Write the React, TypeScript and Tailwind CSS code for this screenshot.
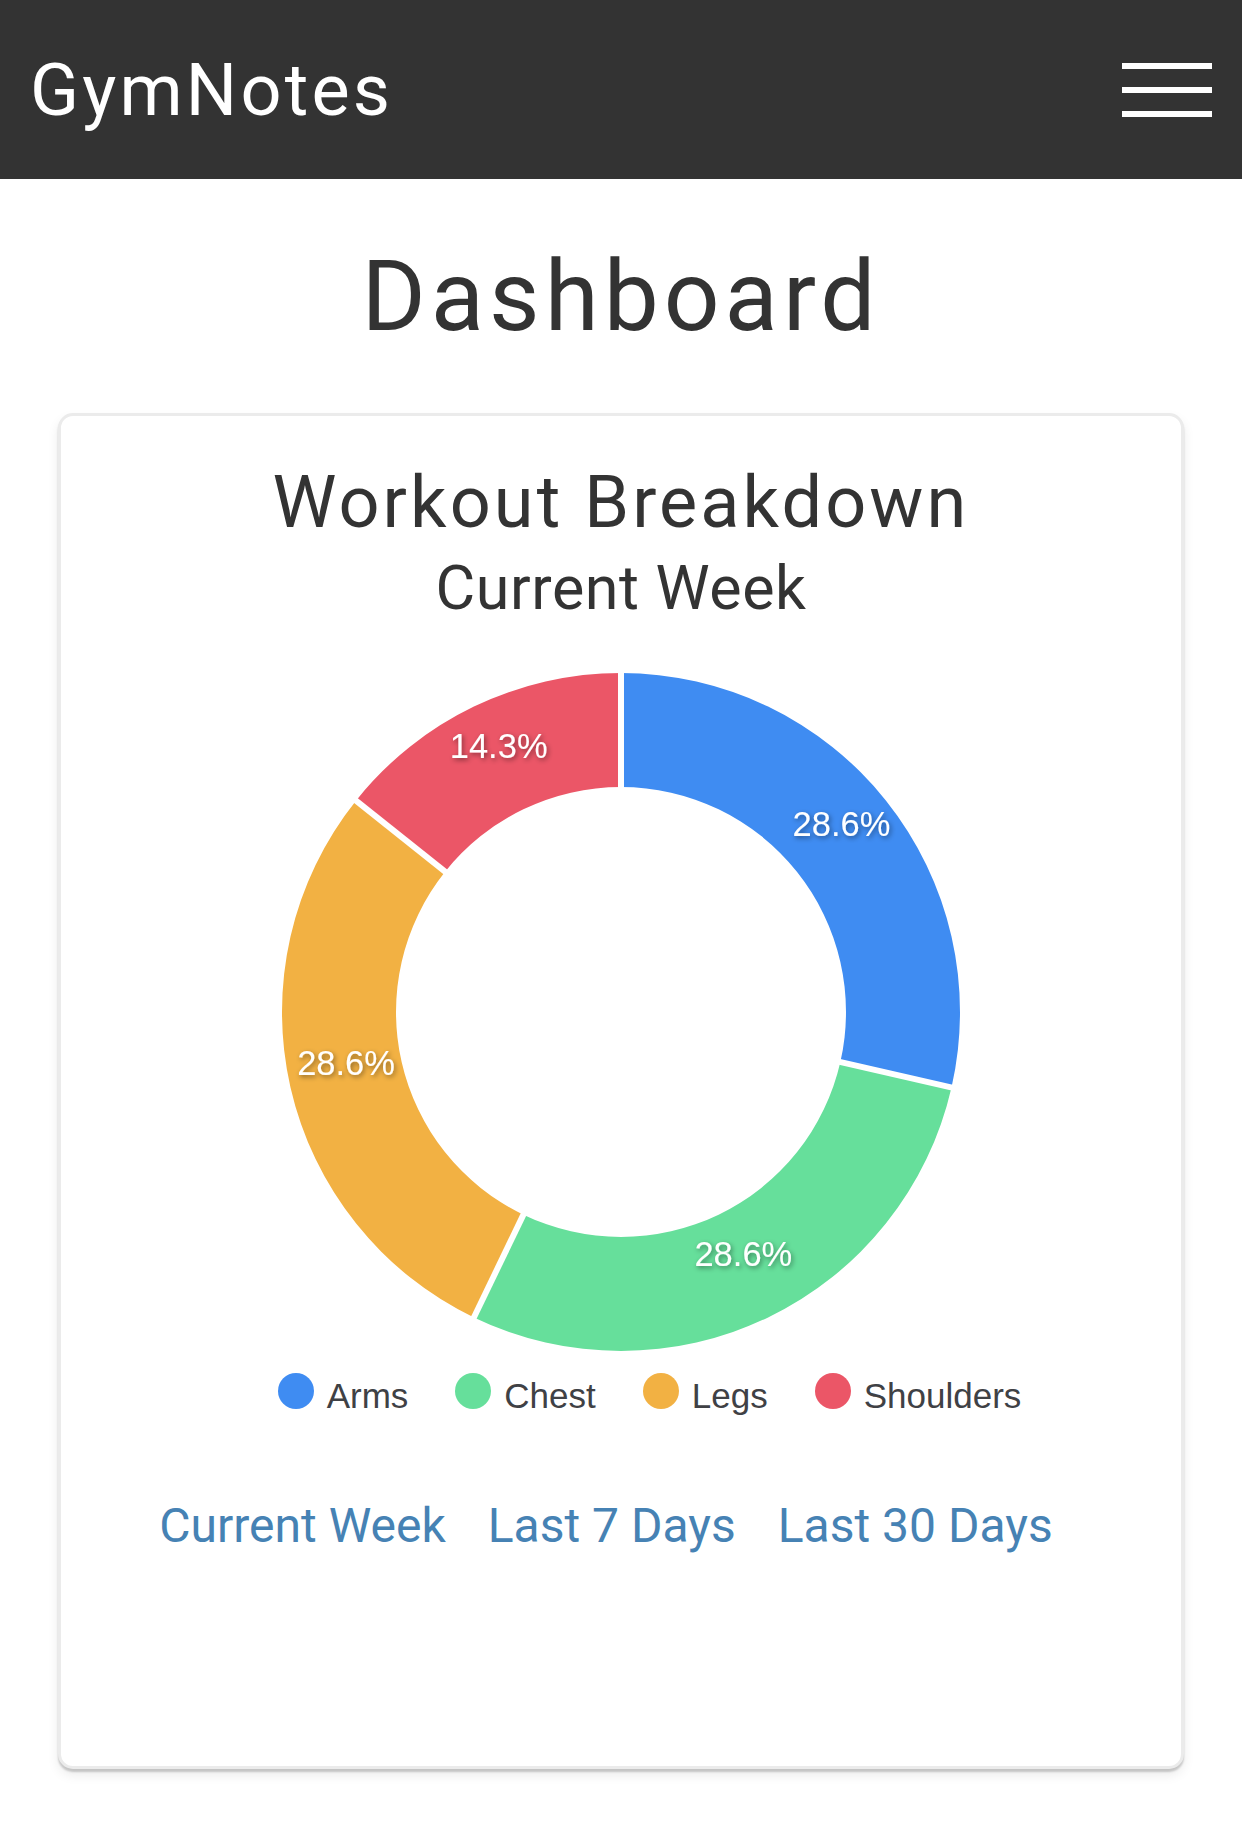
import React from "react";

type Slice = { label: string; value: number; color: string };

const slices: Slice[] = [
  { label: "Arms", value: 2, color: "#3f8cf2" },
  { label: "Chest", value: 2, color: "#66df9b" },
  { label: "Legs", value: 2, color: "#f2b143" },
  { label: "Shoulders", value: 1, color: "#eb5667" },
];

const SIZE = 690;
const C = SIZE / 2;
const R_OUT = 339;
const R_IN = 225;

// angle in degrees, 0 = top, clockwise
const pt = (r: number, deg: number) => {
  const a = (deg * Math.PI) / 180;
  return [C + r * Math.sin(a), C - r * Math.cos(a)];
};

const arcPath = (a0: number, a1: number) => {
  const large = a1 - a0 > 180 ? 1 : 0;
  const [x0, y0] = pt(R_OUT, a0);
  const [x1, y1] = pt(R_OUT, a1);
  const [x2, y2] = pt(R_IN, a1);
  const [x3, y3] = pt(R_IN, a0);
  return `M${x0} ${y0} A${R_OUT} ${R_OUT} 0 ${large} 1 ${x1} ${y1} L${x2} ${y2} A${R_IN} ${R_IN} 0 ${large} 0 ${x3} ${y3} Z`;
};

function Donut() {
  const total = slices.reduce((s, d) => s + d.value, 0);
  let start = 0;
  const parts = slices.map((d) => {
    const sweep = (d.value / total) * 360;
    const p = { ...d, a0: start, a1: start + sweep };
    start += sweep;
    return p;
  });

  return (
    <svg width={SIZE} height={SIZE} viewBox={`0 0 ${SIZE} ${SIZE}`}>
      <defs>
        <filter id="lblShadow" x="-30%" y="-50%" width="160%" height="200%">
          <feDropShadow dx="1.5" dy="2" stdDeviation="2.5" floodColor="#000" floodOpacity="0.45" />
        </filter>
      </defs>
      {parts.map((p) => (
        <path key={p.label} d={arcPath(p.a0, p.a1)} fill={p.color} />
      ))}
      {parts.map((p) => {
        const [x0, y0] = pt(R_IN - 4, p.a0);
        const [x1, y1] = pt(R_OUT + 4, p.a0);
        return <line key={"b" + p.label} x1={x0} y1={y0} x2={x1} y2={y1} stroke="#fff" strokeWidth={6} />;
      })}
      {parts.map((p) => {
        const [x, y] = pt((R_IN + R_OUT) / 2, (p.a0 + p.a1) / 2);
        return (
          <text
            key={"t" + p.label}
            x={x}
            y={y}
            textAnchor="middle"
            fill="#fff"
            fontSize={34.5}
            filter="url(#lblShadow)"
            style={{ fontFamily: '"Liberation Sans", Arial, sans-serif' }}
          >
            {((p.value / total) * 100).toFixed(1)}%
          </text>
        );
      })}
    </svg>
  );
}

export default function App() {
  return (
    <div className="min-h-[1845px] bg-white font-['Roboto',sans-serif] text-[#333]">
      <header className="flex h-[179px] items-center justify-between bg-[#333] px-[30px]">
        <div className="pt-[2px] text-[72px] leading-[72px] tracking-[3.2px] text-white">GymNotes</div>
        <button className="flex w-[90px] flex-col gap-[18px]" aria-label="menu">
          <span className="block h-[6px] w-full bg-white" />
          <span className="block h-[6px] w-full bg-white" />
          <span className="block h-[6px] w-full bg-white" />
        </button>
      </header>

      <h1 className="mt-[69px] text-center text-[98px] leading-[98px] tracking-[5px]">Dashboard</h1>

      <section className="mx-[58px] mt-[67px] rounded-[15px] border-[3px] border-[#ebebeb] bg-white pb-[216px] shadow-[0_3px_2px_rgba(0,0,0,0.18),0_6px_12px_rgba(0,0,0,0.08)]">
        <h2 className="mt-[51px] text-center text-[72px] leading-[72px] tracking-[3.1px]">Workout Breakdown</h2>
        <p className="mt-[19px] text-center text-[61px] leading-[61px] tracking-[0.6px]">Current Week</p>

        <div className="mt-[48px] flex justify-center">
          <Donut />
        </div>

        <div className="mt-[16px] flex justify-center gap-[47px] pl-[57px] font-['Liberation_Sans',Arial,sans-serif] text-[35px] text-[#3f4145]">
          {slices.map((s) => (
            <div key={s.label} className="flex h-[36px] items-start gap-[13px]">
              <span className="block h-[36px] w-[36px] shrink-0 rounded-full" style={{ backgroundColor: s.color }} />
              <span className="h-[36px] pt-[5px] leading-[36px]">{s.label}</span>
            </div>
          ))}
        </div>

        <nav className="mt-[93px] flex justify-center gap-[42px] pr-[30px] text-[48px] leading-[48px] text-[#4682b4]">
          <a href="#">Current Week</a>
          <a href="#">Last 7 Days</a>
          <a href="#">Last 30 Days</a>
        </nav>
      </section>
    </div>
  );
}
